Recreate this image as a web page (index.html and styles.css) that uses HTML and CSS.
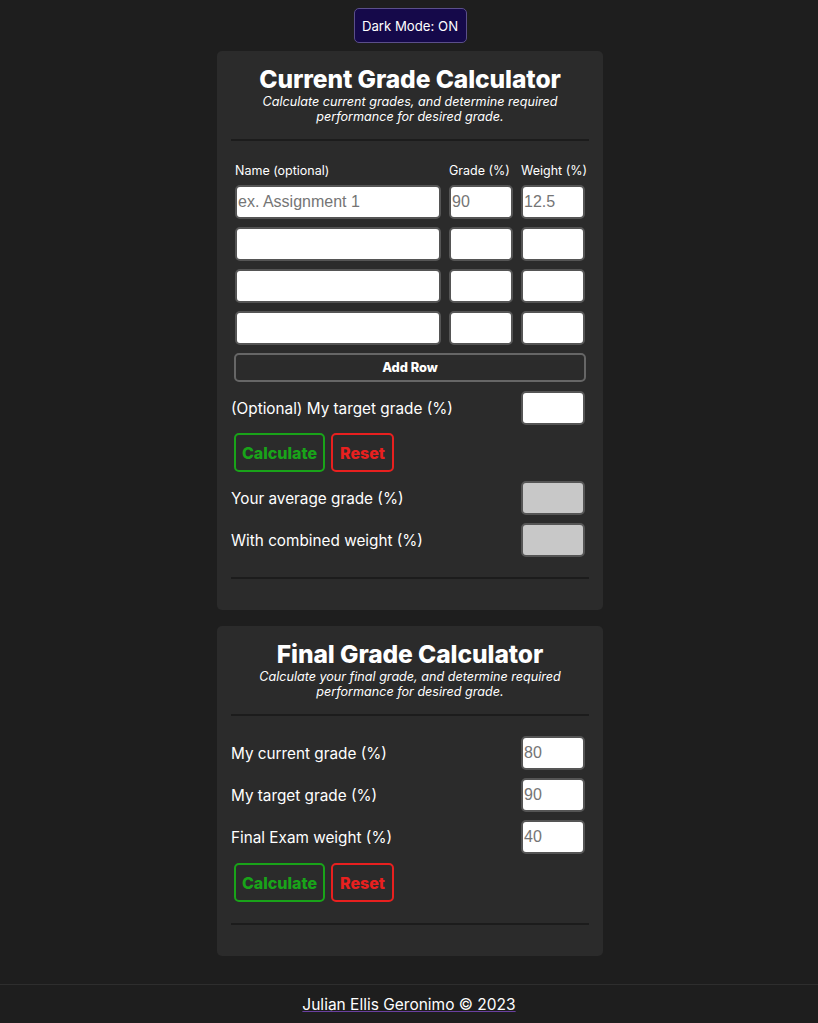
FILE: index.html
```html
<!DOCTYPE html>
<html lang="en">
<head>
<meta charset="utf-8">
<title>Grade Calculator</title>
<link rel="stylesheet" href="styles.css">
</head>
<body>
<div class="page">
  <button class="mode-btn">Dark Mode: ON</button>

  <section class="card">
    <h1 class="card-title">Current Grade Calculator</h1>
    <p class="card-sub">Calculate current grades, and determine required<br>performance for desired grade.</p>
    <hr class="divider">

    <div class="grade-table">
      <div class="th">Name (optional)</div>
      <div class="th">Grade (%)</div>
      <div class="th">Weight (%)</div>
      <input class="field" placeholder="ex. Assignment 1">
      <input class="field" placeholder="90">
      <input class="field" placeholder="12.5">
      <input class="field"><input class="field"><input class="field">
      <input class="field"><input class="field"><input class="field">
      <input class="field"><input class="field"><input class="field">
    </div>
    <button class="add-row">Add Row</button>

    <div class="form-row first">
      <span class="label">(Optional) My target grade (%)</span>
      <input class="field small">
    </div>
    <div class="actions">
      <button class="btn calc">Calculate</button>
      <button class="btn reset">Reset</button>
    </div>
    <div class="form-row">
      <span class="label">Your average grade (%)</span>
      <input class="field small out" disabled>
    </div>
    <div class="form-row tight">
      <span class="label">With combined weight (%)</span>
      <input class="field small out" disabled>
    </div>
    <hr class="divider bottom">
  </section>

  <section class="card card-final">
    <h1 class="card-title">Final Grade Calculator</h1>
    <p class="card-sub">Calculate your final grade, and determine required<br>performance for desired grade.</p>
    <hr class="divider">

    <div class="form-row final-first">
      <span class="label">My current grade (%)</span>
      <input class="field small" placeholder="80">
    </div>
    <div class="form-row tight">
      <span class="label">My target grade (%)</span>
      <input class="field small" placeholder="90">
    </div>
    <div class="form-row tight">
      <span class="label">Final Exam weight (%)</span>
      <input class="field small" placeholder="40">
    </div>
    <div class="actions">
      <button class="btn calc">Calculate</button>
      <button class="btn reset">Reset</button>
    </div>
    <hr class="divider bottom">
  </section>
</div>
<footer class="footer">
  <a class="footer-link" href="#">Julian Ellis Geronimo © 2023</a>
</footer>
</body>
</html>
```

FILE: styles.css
```css
* { box-sizing: border-box; }

html, body {
  margin: 0;
  padding: 0;
  background: #1e1e1e;
  color: #ffffff;
  font-family: "Inter", "Noto Sans", sans-serif;
}

.page {
  display: flex;
  flex-direction: column;
  align-items: center;
  padding-top: 8px;
  padding-left: 2px;
}

.mode-btn {
  height: 35px;
  width: 113px;
  padding: 0;
  background: #15094a;
  color: #ffffff;
  border: 1px solid #5b4f8a;
  border-radius: 5px;
  font-family: "Inter", sans-serif;
  font-size: 13.2px;
}

.card {
  width: 386px;
  margin-top: 8px;
  background: #2b2b2b;
  border-radius: 5px;
  padding: 14px 14px 31px;
  display: flex;
  flex-direction: column;
}
.card + .card { margin-top: 16px; }

.card-title {
  margin: 0;
  font-size: 24.6px;
  line-height: 28px;
  font-weight: 800;
  text-align: center;
  letter-spacing: -0.1px;
}

.card-sub {
  margin: 1px 0 0;
  font-size: 12.6px;
  line-height: 15px;
  font-style: italic;
  text-align: center;
}

.divider {
  margin: 15px 0 0;
  border: none;
  height: 2px;
  background: #1c1c1c;
}
.divider.bottom { margin-top: 20px; }
.card-final .divider.bottom { margin-top: 21px; }

.grade-table {
  margin: 23px 4px 0;
  display: grid;
  grid-template-columns: 206px 64px 64px;
  column-gap: 8px;
  row-gap: 8px;
}
.th {
  font-size: 12.5px;
  line-height: 14px;
  margin-bottom: -1px;
  white-space: nowrap;
}

.field {
  height: 34px;
  width: 100%;
  border: 2px solid #555555;
  border-radius: 5px;
  background: #ffffff;
  padding: 0 1px;
  font-family: "Liberation Sans", Arial, sans-serif;
  font-size: 16px;
  color: #000;
}
.field::placeholder { color: #757575; }
.field.small { width: 64px; }
.field.out { background: #c8c8c8; }

.add-row {
  margin: 8px 3px 0;
  height: 29px;
  background: transparent;
  border: 2px solid #666666;
  border-radius: 5px;
  color: #ffffff;
  font-family: "Inter", sans-serif;
  font-weight: 800;
  font-size: 12.8px;
}

.form-row {
  display: flex;
  justify-content: space-between;
  align-items: center;
  padding-right: 4px;
  margin-top: 9px;
}
.form-row.tight { margin-top: 8px; }
.form-row.final-first { margin-top: 20px; }

.label {
  font-size: 15.3px;
}

.actions {
  display: flex;
  gap: 6px;
  margin: 8px 0 0 3px;
}
.card-final .actions { margin-top: 9px; }

.btn {
  height: 39px;
  background: transparent;
  border: 2px solid;
  border-radius: 5px;
  font-family: "Inter", sans-serif;
  font-weight: 800;
  font-size: 16px;
  padding: 0;
}
.btn.calc { width: 91px; color: #19a319; border-color: #19a319; }
.btn.reset { width: 63px; color: #e8201f; border-color: #e8201f; }

.footer {
  margin-top: 28px;
  border-top: 1px solid #2e2e2e;
  height: 39px;
  display: flex;
  align-items: center;
  justify-content: center;
}
.footer-link {
  color: #ffffff;
  font-size: 15.5px;
  text-decoration-color: #6a3fa0;
}
```
